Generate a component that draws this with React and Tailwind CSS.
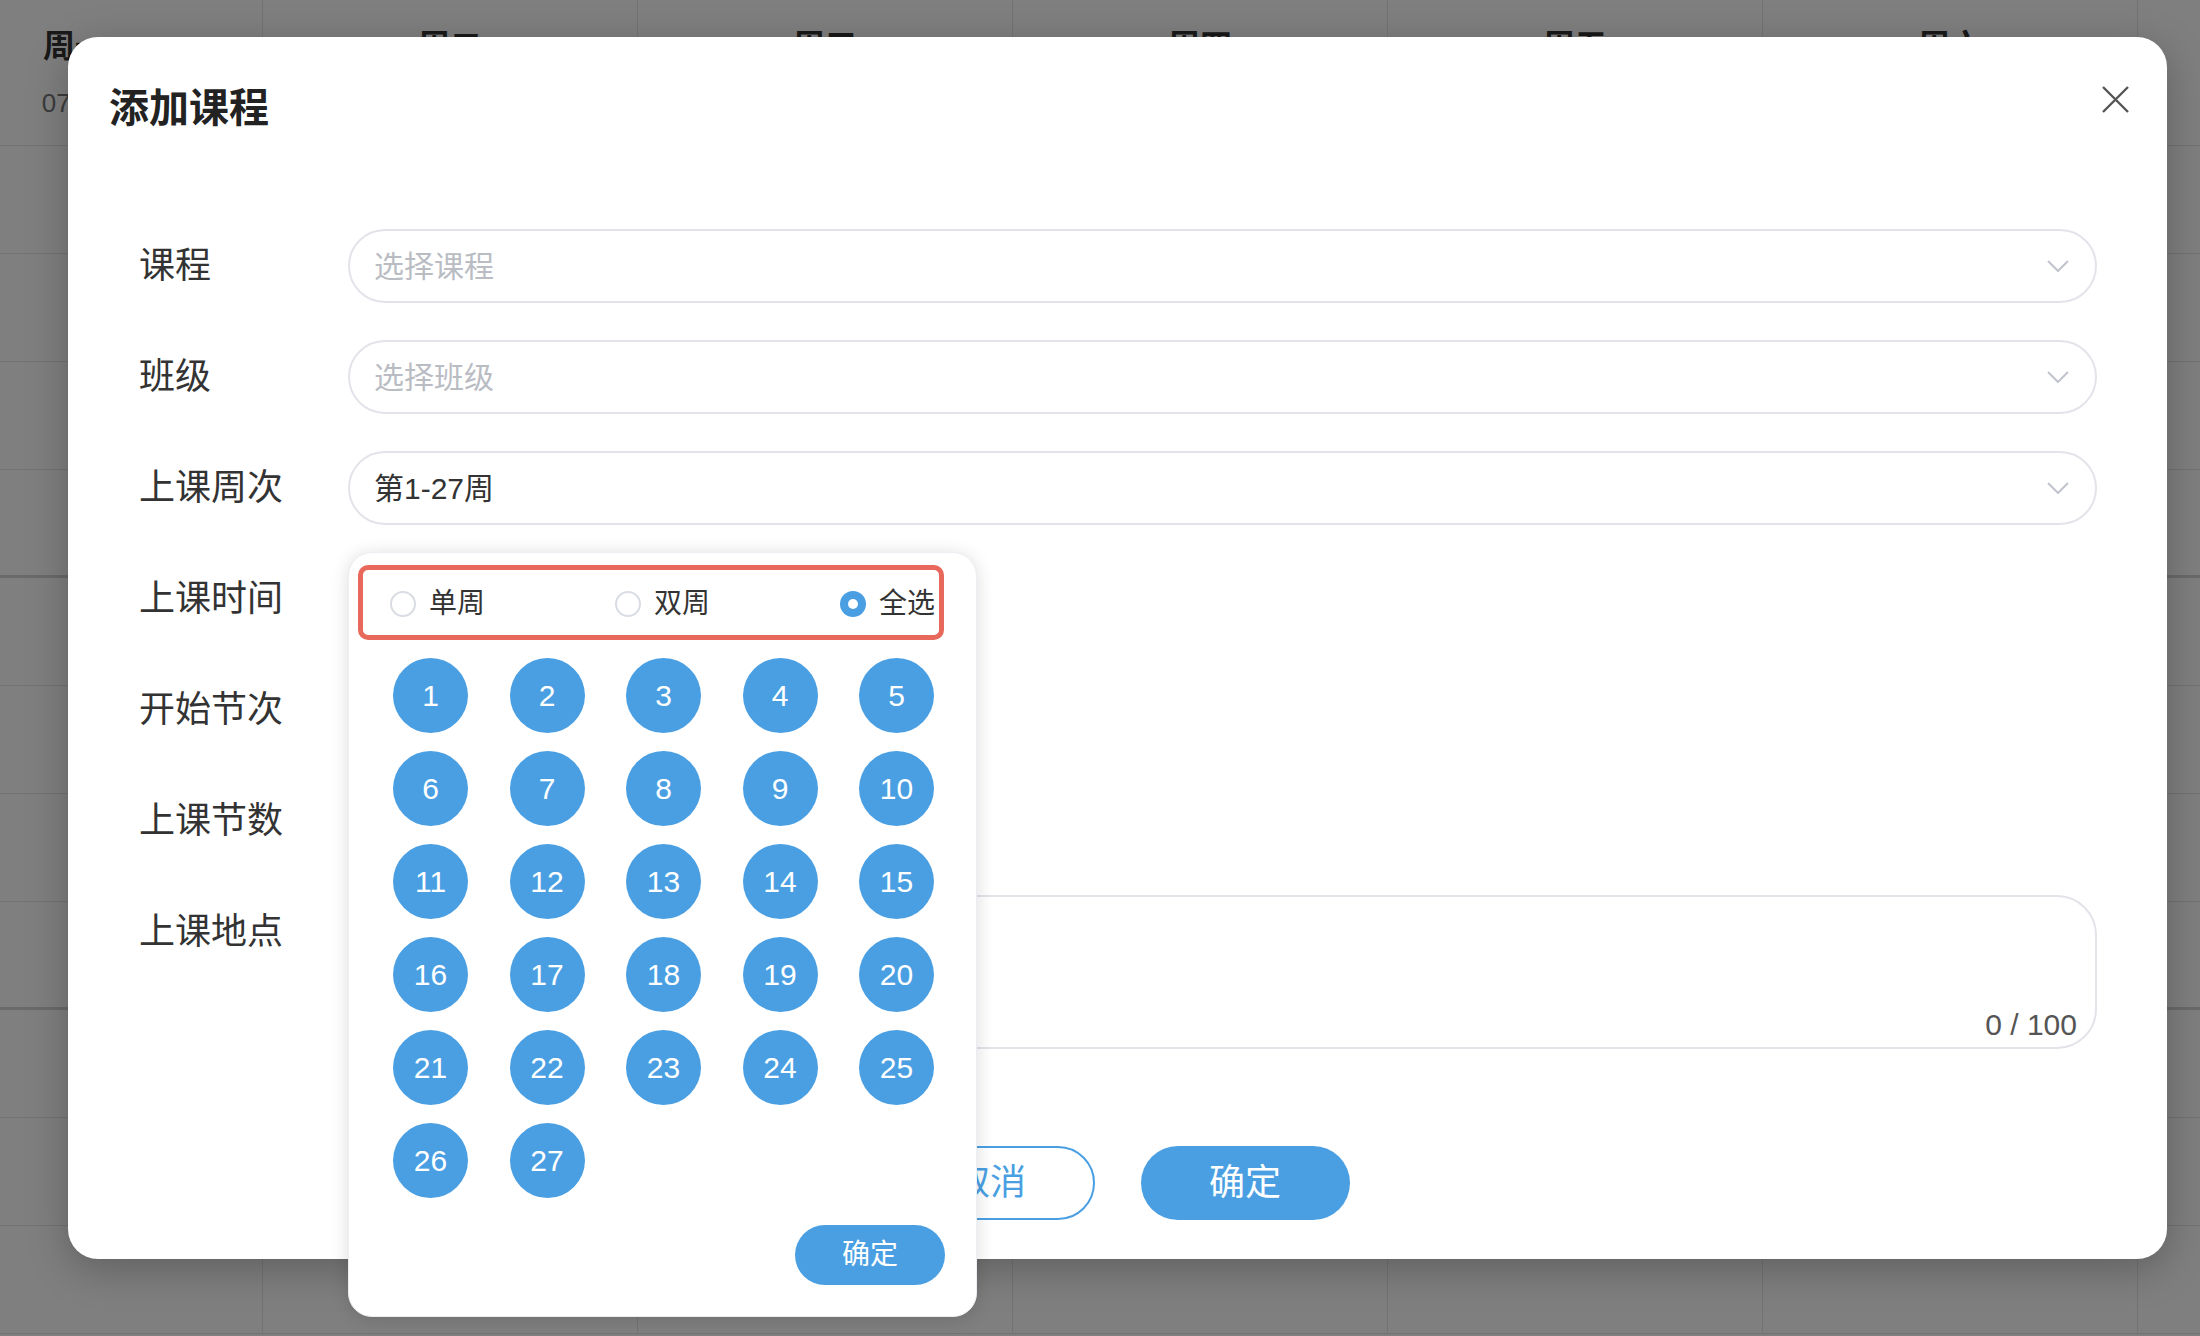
import { useState } from "react";

const DAYS = [
  ["周一", "07-01"],
  ["周二", "07-02"],
  ["周三", "07-03"],
  ["周四", "07-04"],
  ["周五", "07-05"],
  ["周六", "07-06"],
  ["周日", "07-07"],
];

const SLOTS = Array.from({ length: 11 }, (_, i) => i);
const WEEKS = Array.from({ length: 27 }, (_, i) => i + 1);

const Chevron = () => (
  <svg width="22" height="12" viewBox="0 0 22 12" fill="none">
    <path d="M1 1l10 10L21 1" stroke="#c0c4cc" strokeWidth="2" />
  </svg>
);

// background week table, dimmed by the dialog mask
const Timetable = () => (
  <div className="ml-[-112px] flex">
    {DAYS.map(([day, date]) => (
      <div key={day} className="w-[375px] shrink-0 border-r border-[#e6e6e6]">
        <div className="flex h-[146px] flex-col items-center border-b border-[#e6e6e6] pt-[26px]">
          <div className="text-[32px] font-bold leading-[40px] text-[#333]">{day}</div>
          <div className="mt-[20px] text-[26px] leading-[34px] text-[#777]">{date}</div>
        </div>
        {SLOTS.map((i) => (
          <div
            key={i}
            className={
              i === 3 || i === 7
                ? "h-[108px] border-b-[3px] border-[#d4d4d4]"
                : "h-[108px] border-b border-[#e6e6e6]"
            }
          />
        ))}
      </div>
    ))}
  </div>
);

const Field = ({ label, children }) => (
  <div className="flex">
    <div className="flex h-[74px] w-[209px] shrink-0 items-center text-[36px] text-[#333]">{label}</div>
    <div className="relative min-w-0 flex-1">{children}</div>
  </div>
);

const Select = ({ value, placeholder }) => (
  <div className="flex h-[74px] items-center justify-between rounded-full border-2 border-[#e2e4ea] pl-[24px] pr-[26px] text-[30px]">
    {value ? (
      <span className="text-[#333]">{value}</span>
    ) : (
      <span className="text-[#b9bcc3]">{placeholder}</span>
    )}
    <Chevron />
  </div>
);

const Radio = ({ label, checked, onClick }) => (
  <button onClick={onClick} className="flex items-center">
    {checked ? (
      <span className="flex h-[26px] w-[26px] items-center justify-center rounded-full bg-[#4a9fe3]">
        <span className="h-[10px] w-[10px] rounded-full bg-white" />
      </span>
    ) : (
      <span className="h-[26px] w-[26px] rounded-full border-2 border-[#d9dce3] bg-white" />
    )}
    <span className="ml-[13px] text-[28px] text-[#333]">{label}</span>
  </button>
);

const WeekPicker = () => {
  const [mode, setMode] = useState("all");
  return (
    <div className="absolute left-0 top-[101px] z-10 w-[629px] rounded-[24px] border border-[#eceef3] bg-white pb-[31px] pt-[33px] shadow-[0_2px_18px_rgba(0,0,0,0.14)]">
      <div className="flex h-[36px] items-center justify-between pl-[41px] pr-[41px]">
        <Radio label="单周" checked={mode === "odd"} onClick={() => setMode("odd")} />
        <Radio label="双周" checked={mode === "even"} onClick={() => setMode("even")} />
        <Radio label="全选" checked={mode === "all"} onClick={() => setMode("all")} />
      </div>
      <div className="mt-[36px] grid grid-cols-[repeat(5,75px)] justify-between gap-y-[18px] pl-[44px] pr-[42px]">
        {WEEKS.map((w) => (
          <div
            key={w}
            className="flex h-[75px] w-[75px] items-center justify-center rounded-full bg-[#4a9fe3] text-[30px] text-white"
          >
            {w}
          </div>
        ))}
      </div>
      <div className="mt-[27px] flex justify-end pr-[31px]">
        <button className="h-[60px] w-[150px] rounded-full bg-[#4a9fe3] text-[28px] text-white">确定</button>
      </div>
      {/* highlight around the odd/even/all switch */}
      <div className="absolute left-[9px] top-[12px] h-[75px] w-[586px] rounded-[10px] border-[5px] border-[#e8695b]" />
    </div>
  );
};

const CourseDialog = () => (
  <div className="absolute left-[68px] top-[37px] h-[1222px] w-[2099px] rounded-[30px] bg-white shadow-[0_10px_40px_rgba(0,0,0,0.25)]">
    <div className="px-[41px] pt-[51px] text-[40px] font-bold leading-[40px] text-[#222]">添加课程</div>
    <button className="absolute right-[38px] top-[49px]">
      <svg width="27" height="27" viewBox="0 0 27 27" fill="none">
        <path d="M1 1l25 25M26 1L1 26" stroke="#555" strokeWidth="2.4" />
      </svg>
    </button>

    <div className="mt-[101px] flex flex-col gap-[37px] pl-[71px] pr-[70px]">
      <Field label="课程">
        <Select placeholder="选择课程" />
      </Field>
      <Field label="班级">
        <Select placeholder="选择班级" />
      </Field>
      <Field label="上课周次">
        <Select value="第1-27周" />
        <WeekPicker />
      </Field>
      <Field label="上课时间">
        <div className="h-[74px]" />
      </Field>
      <Field label="开始节次">
        <div className="h-[74px]" />
      </Field>
      <Field label="上课节数">
        <div className="h-[74px]" />
      </Field>
      <Field label="上课地点">
        <div className="relative h-[154px] rounded-[40px] border-2 border-[#e2e4ea]">
          <span className="absolute bottom-[7px] right-[18px] text-[30px] leading-[30px] text-[#555]">0 / 100</span>
        </div>
      </Field>
    </div>

    <div className="mt-[97px] flex justify-center gap-[46px]">
      <button className="h-[74px] w-[209px] rounded-full border-2 border-[#4a9fe3] bg-white text-[36px] text-[#4a9fe3]">
        取消
      </button>
      <button className="h-[74px] w-[209px] rounded-full bg-[#4a9fe3] text-[36px] text-white">确定</button>
    </div>
  </div>
);

export default function App() {
  return (
    <div className="relative h-[1336px] w-[2200px] overflow-hidden bg-white font-['Liberation_Sans','Noto_Sans_CJK_SC',sans-serif]">
      <Timetable />
      <div className="absolute inset-0 bg-black/50" />
      <CourseDialog />
    </div>
  );
}
